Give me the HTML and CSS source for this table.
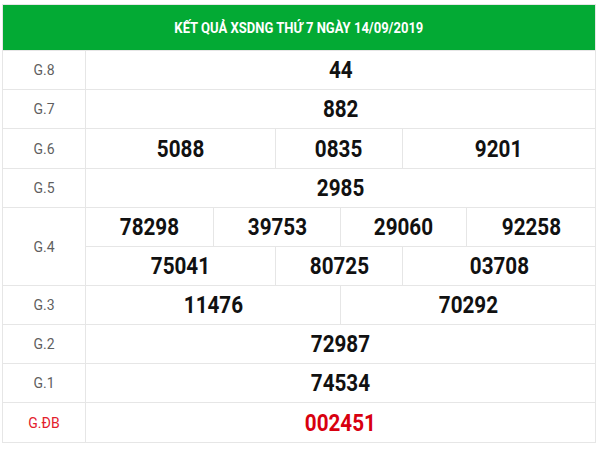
FILE: index.html
```html
<!DOCTYPE html>
<html lang="vi">
<head>
<meta charset="utf-8">
<title>Kết quả XSDNG</title>
<link rel="stylesheet" href="styles.css">
</head>
<body>
<div class="board">
  <div class="head"><span class="cond title">KẾT QUẢ XSDNG THỨ 7 NGÀY 14/09/2019</span></div>

  <div class="lbl">G.8</div>
  <div class="num s6"><span class="cond">44</span></div>

  <div class="lbl">G.7</div>
  <div class="num s6"><span class="cond">882</span></div>

  <div class="lbl">G.6</div>
  <div class="num s2"><span class="cond">5088</span></div>
  <div class="num s2"><span class="cond">0835</span></div>
  <div class="num s2"><span class="cond">9201</span></div>

  <div class="lbl">G.5</div>
  <div class="num s6"><span class="cond">2985</span></div>

  <div class="lbl r2">G.4</div>
  <div class="num s1"><span class="cond">78298</span></div>
  <div class="num s2"><span class="cond">39753</span></div>
  <div class="num s2"><span class="cond">29060</span></div>
  <div class="num s1"><span class="cond">92258</span></div>
  <div class="num s2"><span class="cond">75041</span></div>
  <div class="num s2"><span class="cond">80725</span></div>
  <div class="num s2"><span class="cond">03708</span></div>

  <div class="lbl">G.3</div>
  <div class="num s3"><span class="cond">11476</span></div>
  <div class="num s3"><span class="cond">70292</span></div>

  <div class="lbl">G.2</div>
  <div class="num s6"><span class="cond">72987</span></div>

  <div class="lbl">G.1</div>
  <div class="num s6"><span class="cond">74534</span></div>

  <div class="lbl red">G.ĐB</div>
  <div class="num s6 red"><span class="cond">002451</span></div>
</div>
</body>
</html>
```
FILE: styles.css
```css
html, body {
  margin: 0;
  padding: 0;
  background: #ffffff;
}

body {
  font-family: Roboto, "Liberation Sans", Arial, sans-serif;
}

.board {
  margin: 4px 0 0 2px;
  width: 594px;
  box-sizing: border-box;
  padding: 1px;
  background: #e6e6e6;
  display: grid;
  gap: 1px;
  grid-template-columns: 82px 127px 61px 64px 61px 63px 128px;
  grid-template-rows: 45px 38px 38px 39px 38px 38px 38px 38px 38px 38px 39px;
}

.board > div {
  background: #ffffff;
  display: flex;
  align-items: center;
  justify-content: center;
}

.board > .head {
  grid-column: 1 / -1;
  background: #03aa34;
  color: #ffffff;
  font-weight: 700;
  font-size: 14px;
  padding-top: 1px;
}

.cond {
  display: inline-block;
  transform: scaleX(0.86);
  white-space: nowrap;
}

.cond.title {
  transform: scaleX(0.93);
}

.lbl {
  grid-column: 1;
  color: #5f5f5f;
  font-size: 14px;
}

.lbl.r2 {
  grid-row: span 2;
}

.num {
  color: #111111;
  font-weight: 700;
  font-size: 24px;
}

.s1 { grid-column: span 1; }
.s2 { grid-column: span 2; }
.s3 { grid-column: span 3; }
.s6 { grid-column: span 6; }

.lbl.red { color: #e3202c; }
.num.red { color: #d8000f; }
```
